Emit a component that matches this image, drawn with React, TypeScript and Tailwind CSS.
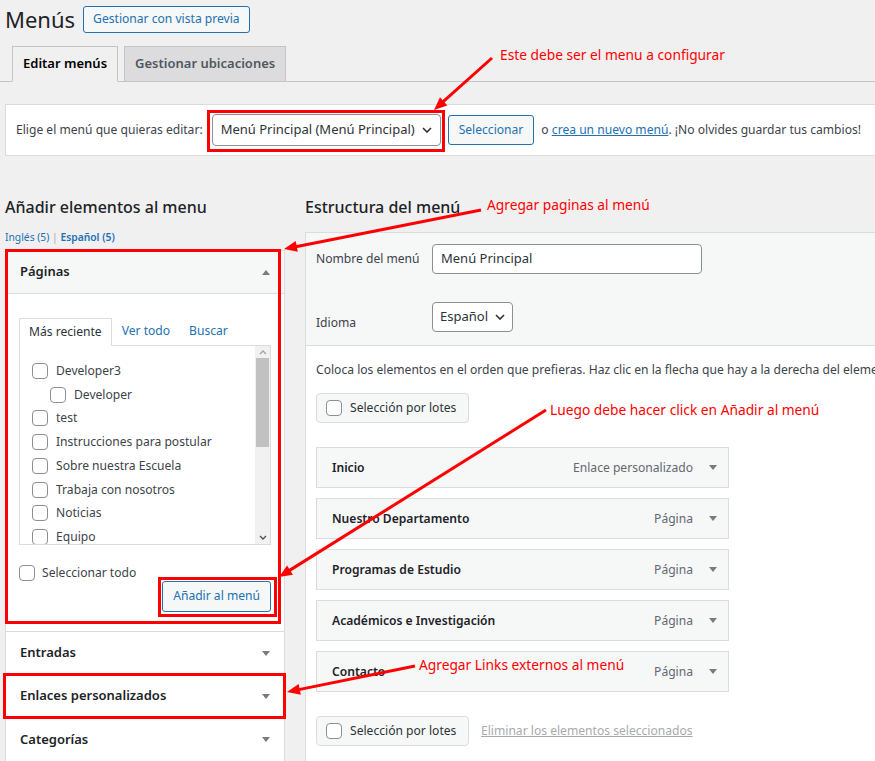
import React from "react";

const RED = "#ff0000";

function Checkbox() {
  return <span className="inline-block h-4 w-4 shrink-0 rounded-[4px] border border-[#8c8f94] bg-white" />;
}

function TriDown() {
  return (
    <svg width="8" height="5" viewBox="0 0 8 5" className="shrink-0">
      <polygon points="0,0 8,0 4,5" fill="#787c82" />
    </svg>
  );
}

function TriUp() {
  return (
    <svg width="8" height="5" viewBox="0 0 8 5" className="shrink-0">
      <polygon points="0,5 8,5 4,0" fill="#787c82" />
    </svg>
  );
}

function Chevron({ up = false, color = "#2c3338" }: { up?: boolean; color?: string }) {
  return (
    <svg width="10" height="6" viewBox="0 0 10 6" className="shrink-0">
      <path d={up ? "M1 5l4-4 4 4" : "M1 1l4 4 4-4"} stroke={color} strokeWidth="1.6" fill="none" />
    </svg>
  );
}

function Arrow({ x1, y1, x2, y2 }: { x1: number; y1: number; x2: number; y2: number }) {
  const dx = x2 - x1;
  const dy = y2 - y1;
  const len = Math.hypot(dx, dy);
  const ux = dx / len;
  const uy = dy / len;
  const hl = 13;
  const hw = 5.5;
  const bx = x2 - ux * hl;
  const by = y2 - uy * hl;
  const pts = `${x2},${y2} ${bx - uy * hw},${by + ux * hw} ${bx + uy * hw},${by - ux * hw}`;
  return (
    <g>
      <line x1={x1} y1={y1} x2={bx + ux} y2={by + uy} stroke={RED} strokeWidth="3" />
      <polygon points={pts} fill={RED} />
    </g>
  );
}

const pages = [
  { label: "Developer3", child: false },
  { label: "Developer", child: true },
  { label: "test", child: false },
  { label: "Instrucciones para postular", child: false },
  { label: "Sobre nuestra Escuela", child: false },
  { label: "Trabaja con nosotros", child: false },
  { label: "Noticias", child: false },
  { label: "Equipo", child: false },
];

const menuItems = [
  { title: "Inicio", type: "Enlace personalizado" },
  { title: "Nuestro Departamento", type: "Página" },
  { title: "Programas de Estudio", type: "Página" },
  { title: "Académicos e Investigación", type: "Página" },
  { title: "Contacto", type: "Página" },
];

function ClosedSection({ title, last = false }: { title: string; last?: boolean }) {
  return (
    <div className={`flex h-[43px] items-center justify-between px-[14px] ${last ? "" : "border-b border-[#dcdcde]"}`}>
      <span className="text-[13px] font-semibold text-[#1d2327]">{title}</span>
      <TriDown />
    </div>
  );
}

function BulkButton() {
  return (
    <div className="flex h-[30px] w-[153px] items-center gap-[8px] rounded-[4px] border border-[#dcdcde] bg-[#f6f7f7] pl-[9px] text-[#2c3338]">
      <Checkbox />
      <span>Selección por lotes</span>
    </div>
  );
}

export default function App() {
  return (
    <div className="relative h-[761px] w-full overflow-hidden bg-[#f0f0f1] font-['Noto_Sans',sans-serif] text-[12.1px] text-[#3c434a]">
      {/* title */}
      <div className="flex h-[38px] items-center gap-[8px] pl-[5px]">
        <h1 className="text-[22px] font-normal leading-none text-[#1d2327]">Menús</h1>
        <button className="h-[27px] rounded-[3px] border border-[#2271b1] bg-[#f6f7f7] px-[9px] text-[12.1px] text-[#2271b1]">
          Gestionar con vista previa
        </button>
      </div>

      {/* tabs */}
      <div className="mt-[8px] flex h-[36px] items-end gap-[6px] border-b border-[#c3c4c7] pl-[12px]">
        <div className="-mb-px flex h-[36px] items-center border border-[#c3c4c7] border-b-[#f0f0f1] bg-[#f0f0f1] px-[10px] text-[13px] font-semibold text-black">
          Editar menús
        </div>
        <div className="-mb-px flex h-[36px] items-center border border-[#c3c4c7] bg-[#dcdcde] px-[10px] text-[13px] font-semibold text-[#50575e]">
          Gestionar ubicaciones
        </div>
      </div>

      {/* select menu */}
      <div className="ml-[5px] mt-[22px] flex h-[52px] w-[880px] items-center whitespace-nowrap border border-[#dcdcde] bg-white pl-[10px]">
        <span>Elige el menú que quieras editar:</span>
        <div className="ml-[9px] flex h-[32px] w-[229px] items-center justify-between rounded-[4px] border border-[#8c8f94] bg-white pl-[8px] pr-[8px] text-[13px] text-[#2c3338]">
          <span>Menú Principal (Menú Principal)</span>
          <Chevron />
        </div>
        <button className="ml-[7px] h-[30px] rounded-[3px] border border-[#2271b1] bg-[#f6f7f7] px-[10px] text-[12.1px] text-[#2271b1]">
          Seleccionar
        </button>
        <span className="ml-[7px]">
          o <span className="text-[#2271b1] underline">crea un nuevo menú</span>. ¡No olvides guardar tus cambios!
        </span>
      </div>

      {/* columns */}
      <div className="mt-[34px] flex gap-[20px] pl-[5px]">
        {/* left column */}
        <div className="w-[280px] shrink-0">
          <h2 className="flex h-[34px] items-center text-[16px] font-medium text-[#1d2327]">Añadir elementos al menu</h2>
          <div className="mt-[5px] h-[16px] text-[10.3px] leading-[16px] text-[#2271b1]">
            Inglés (5) <span className="text-[#a7aaad]">|</span> <span className="font-semibold">Español (5)</span>
          </div>

          <div className="mt-[5px] border border-[#dcdcde] bg-white">
            <div className="flex h-[43px] items-center justify-between border-b border-[#dcdcde] bg-[#f6f7f7] px-[14px]">
              <span className="text-[13px] font-semibold text-[#1d2327]">Páginas</span>
              <TriUp />
            </div>
            <div className="border-b border-[#dcdcde] px-[13px] pb-[19px] pt-[24px]">
              <div className="flex h-[27px] items-end">
                <span className="relative z-10 -mb-px flex h-[28px] items-center border border-b-0 border-[#dcdcde] bg-white px-[9px] text-[#2c3338]">
                  Más reciente
                </span>
                <span className="flex h-[27px] items-center px-[10px] text-[#2271b1]">Ver todo</span>
                <span className="flex h-[27px] items-center px-[9px] text-[#2271b1]">Buscar</span>
              </div>
              <div className="flex h-[200px] overflow-hidden border border-[#dcdcde] bg-white">
                <div className="flex-1 pl-[12px] pt-[13px]">
                  {pages.map((p) => (
                    <div
                      key={p.label}
                      className={`flex h-[23.75px] items-center gap-[8px] whitespace-nowrap ${p.child ? "pl-[18px]" : ""}`}
                    >
                      <Checkbox />
                      <span>{p.label}</span>
                    </div>
                  ))}
                </div>
                <div className="flex w-[15px] flex-col bg-[#f1f1f1]">
                  <div className="flex h-[12px] items-center justify-center">
                    <svg width="8" height="5" viewBox="0 0 8 5">
                      <path d="M1 4l3-3 3 3" stroke="#a3a3a3" strokeWidth="1.4" fill="none" />
                    </svg>
                  </div>
                  <div className="mx-[1px] h-[89px] bg-[#c1c1c1]" />
                  <div className="flex-1" />
                  <div className="flex h-[14px] items-center justify-center">
                    <svg width="8" height="5" viewBox="0 0 8 5">
                      <path d="M1 1l3 3 3-3" stroke="#505050" strokeWidth="1.4" fill="none" />
                    </svg>
                  </div>
                </div>
              </div>
              <div className="mt-[20px] flex h-[16px] items-center gap-[7px]">
                <Checkbox />
                <span>Seleccionar todo</span>
              </div>
              <div className="flex justify-end">
                <button className="h-[31px] rounded-[3px] border border-[#2271b1] bg-[#f6f7f7] px-[10px] text-[12.1px] text-[#2271b1]">
                  Añadir al menú
                </button>
              </div>
            </div>
            <ClosedSection title="Entradas" />
            <ClosedSection title="Enlaces personalizados" />
            <ClosedSection title="Categorías" last />
          </div>
        </div>

        {/* right column */}
        <div className="w-[600px] shrink-0">
          <h2 className="flex h-[34px] items-center text-[16px] font-medium text-[#1d2327]">Estructura del menú</h2>
          <div className="mt-[8px] border border-[#dcdcde] bg-white">
            <div className="h-[113px] border-b border-[#dcdcde] bg-[#f6f7f7] px-[10px] pt-[11px]">
              <div className="flex items-center">
                <span className="w-[116px]">Nombre del menú</span>
                <div className="flex h-[30px] w-[270px] items-center rounded-[4px] border border-[#8c8f94] bg-white px-[8px] text-[13px] text-[#2c3338]">
                  Menú Principal
                </div>
              </div>
              <div className="mt-[28px] flex items-end">
                <span className="w-[116px] leading-[18px]">Idioma</span>
                <div className="flex h-[30px] w-[81px] items-center justify-between rounded-[4px] border border-[#8c8f94] bg-white pl-[7px] pr-[7px] text-[13px] text-[#2c3338]">
                  <span>Español</span>
                  <Chevron />
                </div>
              </div>
            </div>
            <div className="px-[10px] pb-[30px] pt-[15px]">
              <p className="whitespace-nowrap leading-[18px]">
                Coloca los elementos en el orden que prefieras. Haz clic en la flecha que hay a la derecha del elemento para mostrar más opciones de configuración.
              </p>
              <div className="mt-[14px]">
                <BulkButton />
              </div>
              <div className="mt-[24px] flex flex-col gap-[10px]">
                {menuItems.map((m) => (
                  <div
                    key={m.title}
                    className="flex h-[41px] w-[413px] items-center justify-between border border-[#dcdcde] bg-[#f6f7f7] pl-[15px] pr-[11px] pt-[1px]"
                  >
                    <span className="font-semibold text-[#1d2327]">{m.title}</span>
                    <span className="flex items-center gap-[16px] text-[#646970]">
                      <span>{m.type}</span>
                      <TriDown />
                    </span>
                  </div>
                ))}
              </div>
              <div className="mt-[24px] flex items-center gap-[12px]">
                <BulkButton />
                <span className="text-[#a7aaad] underline">Eliminar los elementos seleccionados</span>
              </div>
            </div>
          </div>
        </div>
      </div>

      {/* annotations */}
      <svg className="pointer-events-none absolute left-0 top-0" width="875" height="761">
        <rect x="208.5" y="111.5" width="235" height="39" fill="none" stroke={RED} strokeWidth="3" />
        <rect x="6.5" y="250.5" width="273" height="372" fill="none" stroke={RED} strokeWidth="3" />
        <rect x="159.5" y="578.5" width="116" height="37" fill="none" stroke={RED} strokeWidth="3" />
        <rect x="4.5" y="674.5" width="280" height="43" fill="none" stroke={RED} strokeWidth="3" />
        <Arrow x1={492} y1={58} x2={434} y2={110} />
        <Arrow x1={481} y1={210} x2={284} y2={249} />
        <Arrow x1={546} y1={410} x2={279} y2={577} />
        <Arrow x1={415} y1={666} x2={287} y2={692} />
      </svg>
      <span className="pointer-events-none absolute left-[500px] top-[46px] whitespace-nowrap text-[13.75px] leading-[18px] text-[#ff0000]">
        Este debe ser el menu a configurar
      </span>
      <span className="pointer-events-none absolute left-[487px] top-[196px] whitespace-nowrap text-[13.75px] leading-[18px] text-[#ff0000]">
        Agregar paginas al menú
      </span>
      <span className="pointer-events-none absolute left-[550px] top-[401px] whitespace-nowrap text-[13.75px] leading-[18px] text-[#ff0000]">
        Luego debe hacer click en Añadir al menú
      </span>
      <span className="pointer-events-none absolute left-[419px] top-[656px] whitespace-nowrap text-[13.75px] leading-[18px] text-[#ff0000]">
        Agregar Links externos al menú
      </span>
    </div>
  );
}
